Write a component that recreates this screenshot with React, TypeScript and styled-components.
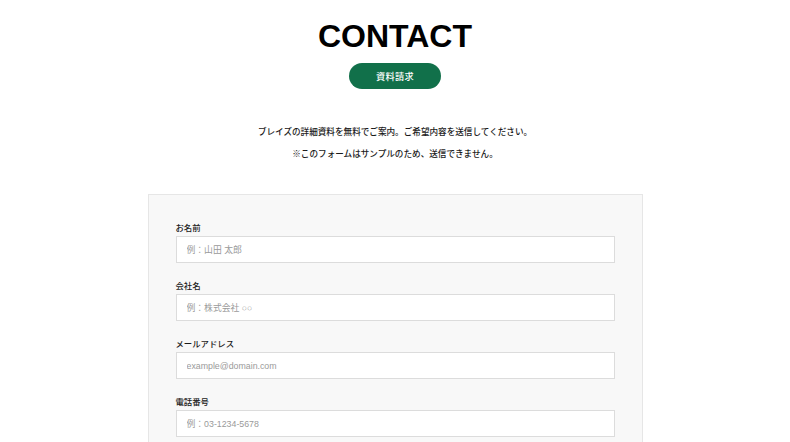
import React from "react";
import styled, { createGlobalStyle } from "styled-components";

const Global = createGlobalStyle`
  html, body { margin: 0; padding: 0; background: #ffffff; overflow: hidden; }
  body { font-family: "Liberation Sans", "Noto Sans CJK JP", Arial, sans-serif; color: #1a1a1a; }
  * { box-sizing: border-box; }
`;

const Page = styled.main`
  display: flex;
  flex-direction: column;
  align-items: center;
  padding-top: 18px;
`;

const Title = styled.h1`
  margin: 0;
  font-family: "Liberation Sans", Arial, sans-serif;
  font-weight: 700;
  font-size: 32px;
  line-height: 36px;
  color: #000;
  letter-spacing: 0;
`;

const PillButton = styled.button`
  margin-top: 9px;
  width: 92px;
  height: 26px;
  border: none;
  border-radius: 13px;
  background: #11704a;
  color: #fff;
  font-family: "Noto Sans CJK JP", sans-serif;
  font-size: 9.2px;
  font-weight: 500;
  letter-spacing: 0.3px;
  cursor: pointer;
`;

const Lead = styled.div`
  margin-top: 31px;
  display: flex;
  flex-direction: column;
  align-items: center;
`;

const LeadLine = styled.p`
  margin: 0;
  font-family: "Noto Sans CJK JP", sans-serif;
  font-size: 8.6px;
  line-height: 22px;
  font-weight: 500;
  color: #1a1a1a;
`;

const Panel = styled.form`
  margin-top: 30px;
  width: 495px;
  background: #f8f8f8;
  border: 1px solid #e6e6e6;
  padding: 26px 27px 26px;
  display: flex;
  flex-direction: column;
  gap: 16px;
`;

const Field = styled.label`
  display: flex;
  flex-direction: column;
  gap: 3px;
`;

const LabelText = styled.span`
  font-family: "Noto Sans CJK JP", sans-serif;
  font-size: 8.4px;
  line-height: 12px;
  font-weight: 500;
  color: #1a1a1a;
`;

const Input = styled.input`
  height: 27px;
  width: 100%;
  border: 1px solid #dcdcdc;
  background: #fff;
  padding: 0 10px;
  font-family: "Liberation Sans", "Noto Sans CJK JP", Arial, sans-serif;
  font-size: 8.8px;
  color: #333;
  outline: none;
  &::placeholder { color: #9a9a9a; }
`;

const fields = [
  { label: "お名前", placeholder: "例：山田 太郎", type: "text" },
  { label: "会社名", placeholder: "例：株式会社 ○○", type: "text" },
  { label: "メールアドレス", placeholder: "example@domain.com", type: "email" },
  { label: "電話番号", placeholder: "例：03-1234-5678", type: "tel" },
];

export default function App() {
  return (
    <>
      <Global />
      <Page>
        <Title>CONTACT</Title>
        <PillButton type="button">資料請求</PillButton>
        <Lead>
          <LeadLine>ブレイズの詳細資料を無料でご案内。ご希望内容を送信してください。</LeadLine>
          <LeadLine>※このフォームはサンプルのため、送信できません。</LeadLine>
        </Lead>
        <Panel onSubmit={(e) => e.preventDefault()}>
          {fields.map((f) => (
            <Field key={f.label}>
              <LabelText>{f.label}</LabelText>
              <Input type={f.type} placeholder={f.placeholder} />
            </Field>
          ))}
        </Panel>
      </Page>
    </>
  );
}
